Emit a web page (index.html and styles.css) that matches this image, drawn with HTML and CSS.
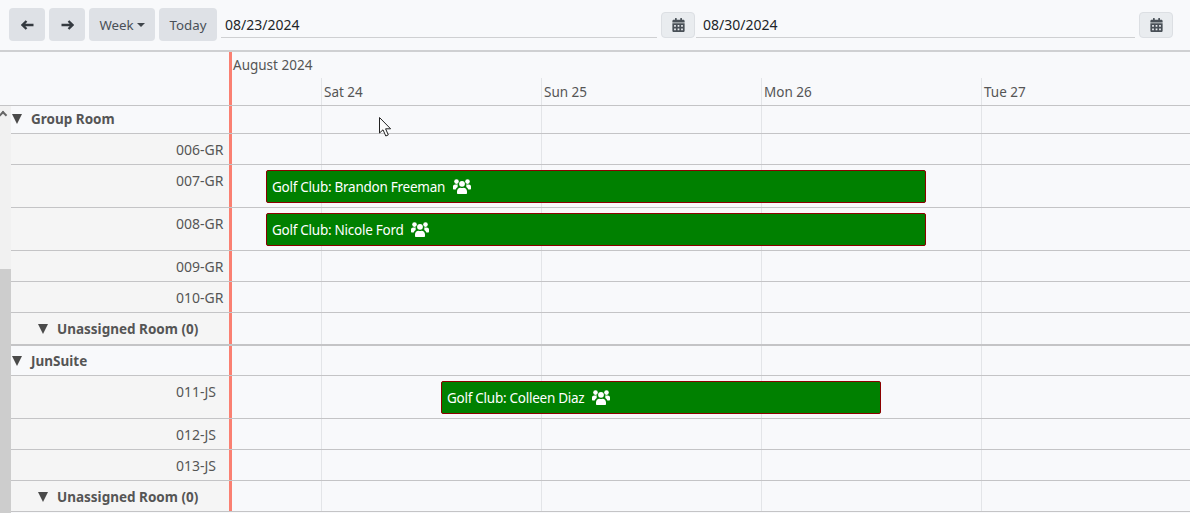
FILE: index.html
```html
<!DOCTYPE html>
<html lang="en">
<head>
<meta charset="utf-8">
<title>Timeline</title>
<link rel="stylesheet" href="styles.css">
</head>
<body>
<svg class="defs" width="0" height="0" aria-hidden="true">
  <symbol id="i-users" viewBox="0 0 18 15">
    <circle cx="9" cy="4.800" r="2.900"/>
    <path d="M4.800 15c-.5 0-.8-.3-.8-.8v-1.600c0-2.200 1.600-3.900 3.400-3.900.5.300 1 .4 1.600.4s1.100-.1 1.600-.4c1.800 0 3.400 1.700 3.400 3.900v1.600c0 .5-.3.800-.8.800z"/>
    <circle cx="3.500" cy="2.600" r="2.300"/>
    <circle cx="14.500" cy="2.600" r="2.300"/>
    <path d="M0 9.500V7.500C0 6.200 1 5.400 2.200 5.400h2.200c.2 0 .4 0 .6.100-.3.500-.4 1-.4 1.500 0 .4.100.8.200 1.100C3.600 8.800 3 9.600 2.700 10.500H1c-.6 0-1-.4-1-1z"/>
    <path d="M18 9.500V7.500C18 6.200 17 5.400 15.800 5.400h-2.200c-.2 0-.4 0-.6.100.3.500.4 1 .4 1.500 0 .4-.1.800-.2 1.100 1.200.7 1.800 1.500 2.100 2.400H17c.6 0 1-.4 1-1z"/>
  </symbol>
  <symbol id="i-cal" viewBox="0 0 448 512"><path d="M0 464c0 26.500 21.500 48 48 48h352c26.500 0 48-21.500 48-48V192H0v272zm320-196c0-6.600 5.400-12 12-12h40c6.600 0 12 5.400 12 12v40c0 6.600-5.400 12-12 12h-40c-6.600 0-12-5.400-12-12v-40zm0 128c0-6.600 5.400-12 12-12h40c6.600 0 12 5.400 12 12v40c0 6.600-5.400 12-12 12h-40c-6.600 0-12-5.400-12-12v-40zM192 268c0-6.600 5.400-12 12-12h40c6.600 0 12 5.400 12 12v40c0 6.600-5.400 12-12 12h-40c-6.600 0-12-5.400-12-12v-40zm0 128c0-6.600 5.400-12 12-12h40c6.600 0 12 5.400 12 12v40c0 6.600-5.400 12-12 12h-40c-6.600 0-12-5.400-12-12v-40zM64 268c0-6.600 5.400-12 12-12h40c6.600 0 12 5.400 12 12v40c0 6.600-5.400 12-12 12H76c-6.600 0-12-5.400-12-12v-40zm0 128c0-6.600 5.400-12 12-12h40c6.600 0 12 5.400 12 12v40c0 6.600-5.400 12-12 12H76c-6.600 0-12-5.400-12-12v-40zM400 64h-48V16c0-8.800-7.200-16-16-16h-32c-8.800 0-16 7.200-16 16v48H160V16c0-8.800-7.200-16-16-16h-32c-8.800 0-16 7.200-16 16v48H48C21.500 64 0 85.500 0 112v48h448v-48c0-26.500-21.500-48-48-48z"/></symbol>
</svg>

<header class="toolbar">
  <button class="tbtn tbtn-icon" type="button"><svg class="arrow" viewBox="0 0 13 10"><path d="M5.500 1L1.500 5l4 4M2 5h10.500"/></svg></button>
  <button class="tbtn tbtn-icon" type="button"><svg class="arrow" viewBox="0 0 13 10"><path d="M7.500 1l4 4-4 4M11 5H.5"/></svg></button>
  <button class="tbtn tbtn-week" type="button">Week<span class="caret"></span></button>
  <button class="tbtn tbtn-today" type="button">Today</button>
  <div class="datefield date-start">08/23/2024</div>
  <button class="calbtn" type="button"><svg class="cal"><use href="#i-cal"/></svg></button>
  <div class="datefield date-end">08/30/2024</div>
  <button class="calbtn" type="button"><svg class="cal"><use href="#i-cal"/></svg></button>
</header>

<section class="head">
  <div class="head-side"></div>
  <div class="head-main">
    <div class="month">August 2024</div>
    <div class="days">
      <div class="day">Sat 24</div>
      <div class="day">Sun 25</div>
      <div class="day">Mon 26</div>
      <div class="day">Tue 27</div>
    </div>
  </div>
</section>

<section class="body">
  <div class="scrollbar"><span class="sb-up"></span><div class="sb-thumb"></div></div>
  <div class="rows">
    <div class="row r-group"><div class="label lab-group"><span class="tri"></span>Group Room</div><div class="track"></div></div>
    <div class="row r-std"><div class="label lab-room">006-GR</div><div class="track"></div></div>
    <div class="row r-tall"><div class="label lab-room">007-GR</div><div class="track"><div class="event ev-a"><span>Golf Club: Brandon Freeman</span><svg class="users"><use href="#i-users"/></svg></div></div></div>
    <div class="row r-tall"><div class="label lab-room">008-GR</div><div class="track"><div class="event ev-a"><span>Golf Club: Nicole Ford</span><svg class="users"><use href="#i-users"/></svg></div></div></div>
    <div class="row r-std"><div class="label lab-room">009-GR</div><div class="track"></div></div>
    <div class="row r-std"><div class="label lab-room">010-GR</div><div class="track"></div></div>
    <div class="row r-un r-end"><div class="label lab-un"><span class="tri"></span>Unassigned Room (0)</div><div class="track"></div></div>
    <div class="row r-group2"><div class="label lab-group lab-group2"><span class="tri"></span>JunSuite</div><div class="track"></div></div>
    <div class="row r-tall"><div class="label lab-room">011-JS</div><div class="track"><div class="event ev-b"><span>Golf Club: Colleen Diaz</span><svg class="users"><use href="#i-users"/></svg></div></div></div>
    <div class="row r-std"><div class="label lab-room">012-JS</div><div class="track"></div></div>
    <div class="row r-std"><div class="label lab-room">013-JS</div><div class="track"></div></div>
    <div class="row r-std"><div class="label lab-un lab-un-last"><span class="tri"></span>Unassigned Room (0)</div><div class="track"></div></div>
  </div>
</section>

<svg class="pointer" viewBox="0 0 13 20" width="13" height="20"><path d="M.5.5v15.500l3.500-3.200 2.800 6.200 2.500-1.100-2.700-6.100h5z" fill="#fbfbfb" stroke="#222" stroke-width="1"/></svg>
</body>
</html>
```

FILE: styles.css
```css
* { box-sizing: border-box; }
html, body { margin: 0; height: 100%; overflow: hidden; }
body {
  background: #f8f9fb;
  font-family: "Noto Sans", "Open Sans", sans-serif;
  font-size: 13px;
  color: #555;
  position: relative;
}
.defs { position: absolute; }

/* toolbar */
.toolbar {
  height: 50px;
  display: flex;
  align-items: flex-start;
  padding: 8px 17px 0 9px;
  gap: 4px;
}
.tbtn {
  height: 33px;
  border: 0;
  border-radius: 4px;
  background: #dee1e6;
  color: #495057;
  font: inherit;
  font-size: 13.3px;
  padding: 0;
  display: flex;
  align-items: center;
  justify-content: center;
}
.tbtn-icon { width: 36px; }
.tbtn-week { width: 66px; }
.tbtn-today { width: 58px; }
.arrow { width: 13px; height: 10px; fill: none; stroke: #343a40; stroke-width: 2.3; }
.caret {
  display: inline-block;
  margin-left: 3px;
  width: 0;
  height: 0;
  border-top: 4px solid #3f454b;
  border-left: 4px solid transparent;
  border-right: 4px solid transparent;
}
.datefield {
  height: 30px;
  border-bottom: 1px solid #cfd0d2;
  padding: 0 4px;
  font-size: 14px;
  line-height: 34px;
  color: #212529;
}
.date-start { width: 436px; }
.date-end { width: 439px; margin-left: -3px; padding-left: 7px; }
.calbtn {
  width: 34px;
  height: 26px;
  margin-top: 4px;
  border: 1px solid #dcdfe3;
  border-radius: 4px;
  background: #e9ecef;
  padding: 0;
  display: flex;
  align-items: center;
  justify-content: center;
}
.cal { width: 13px; height: 14px; fill: #495057; }

/* header */
.head {
  height: 56px;
  display: flex;
  border-top: 2px solid #cfd0d2;
  border-bottom: 1px solid #c4c4c6;
}
.head-side { width: 229px; }
.head-main {
  flex: 1;
  border-left: 3px solid #fa8072;
  min-width: 0;
}
.month { height: 26px; padding-left: 1px; line-height: 27px; font-size: 13.5px; color: #555; }
.days { height: 27px; display: flex; padding-left: 89px; }
.day {
  width: 220px;
  flex: none;
  border-left: 1px solid #e3e5e8;
  padding-left: 2px;
  line-height: 29px;
  font-size: 13.5px;
  color: #555;
}

/* body */
.body { display: flex; height: 407px; }
.scrollbar {
  width: 11px;
  flex: none;
  background: #f1f1f1;
  position: relative;
}
.sb-up {
  position: absolute;
  left: 0;
  top: 6px;
  width: 6px;
  height: 6px;
  border-left: 2px solid #666;
  border-top: 2px solid #666;
  transform: rotate(45deg);
}
.sb-thumb { margin-top: 163px; height: 244px; background: #cdcdcd; }
.rows { flex: 1; min-width: 0; }

.row {
  display: flex;
  border-bottom: 1px solid #c4c4c6;
}
.r-group { height: 28px; }
.r-group2 { height: 30px; }
.r-std { height: 31px; }
.r-tall { height: 43px; }
.r-un { height: 33px; }
.r-end { border-bottom: 2px solid #c4c4c6; }

.label { width: 218px; flex: none; }
.lab-room {
  background: #f5f5f5;
  padding-left: 165px;
  font-size: 14px;
  line-height: 32px;
  color: #555;
}
.lab-group, .lab-un {
  font-weight: 700;
  font-size: 13.5px;
  color: #555;
  display: flex;
  align-items: center;
}
.lab-group { padding-left: 1px; padding-bottom: 2px; }
.lab-group2 { padding-bottom: 0; }
.lab-un { background: #f5f5f5; padding-left: 27px; }
.lab-un-last { padding-top: 1px; }
.tri {
  width: 0;
  height: 0;
  margin-right: 9px;
  border-top: 10px solid #4a4a4a;
  border-left: 5.5px solid transparent;
  border-right: 5.5px solid transparent;
}

.track {
  flex: 1;
  min-width: 0;
  border-left: 3px solid #fa8072;
  background-image: linear-gradient(to right, #e3e5e8 0, #e3e5e8 1px, transparent 1px);
  background-size: 220px 100%;
  background-position: 89px 0;
  background-repeat: repeat-x;
  padding-top: 5px;
}
.event {
  height: 33px;
  background: #008000;
  border: 1px solid #8b0000;
  border-radius: 2px;
  color: #fff;
  display: flex;
  align-items: center;
  gap: 8px;
  padding-left: 5px;
  font-size: 13.5px;
  letter-spacing: -.26px;
}
.ev-a { width: 660px; margin-left: 34px; }
.ev-b { width: 440px; margin-left: 209px; }
.users { width: 18px; height: 15px; fill: #fff; }

.pointer { position: absolute; left: 379px; top: 117px; }
```
